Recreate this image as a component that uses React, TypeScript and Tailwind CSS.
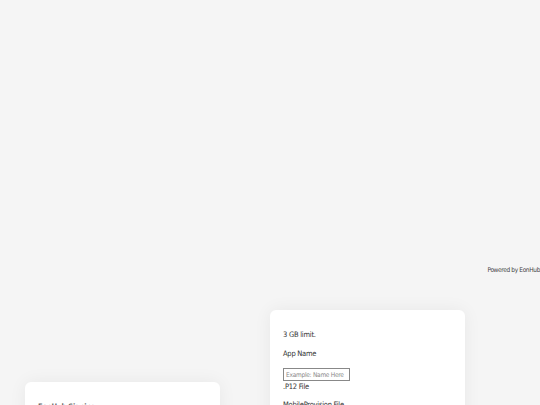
export default function App() {
  return (
    <div
      className="w-[540px] h-[405px] overflow-hidden bg-[#f5f5f5] text-[#333]"
      style={{ fontFamily: '"DejaVu Sans Condensed", "Liberation Sans", sans-serif' }}
    >
      <div className="h-[264px]" />
      <div className="flex justify-end text-[6.5px] leading-[12px] text-[#444] tracking-[-0.35px]">
        Powered by EonHub
      </div>

      <div className="flex items-start gap-[50px] pl-[25px] pt-[34px]">
        {/* Left card */}
        <div className="w-[195px] mt-[72px] bg-white rounded-[6px] shadow-[0_0_18px_rgba(0,0,0,0.06)] px-[13px] pt-[19px] pb-[20px]">
          <h3 className="text-[7.5px] font-semibold text-[#666] tracking-[-0.2px]">EonHub Signing</h3>
        </div>

        {/* Right card */}
        <div className="w-[195px] bg-white rounded-[6px] shadow-[0_0_18px_rgba(0,0,0,0.06)] px-[13px] pt-[19px] pb-[20px] text-[7.5px] tracking-[-0.25px]">
          <p className="leading-[10px] mt-[1px]">3 GB limit.</p>
          <label className="block mt-[9px] leading-[10px]">App Name</label>
          <input
            className="mt-[9px] block w-[67px] h-[13px] border border-[#888] px-[2px] text-[6.5px] text-[#333] placeholder:text-[#888] outline-none"
            placeholder="Example: Name Here"
          />
          <label className="block mt-[1px] leading-[10px]">.P12 File</label>
          <label className="block mt-[8px] leading-[10px]">MobileProvision File</label>
        </div>
      </div>
    </div>
  );
}
